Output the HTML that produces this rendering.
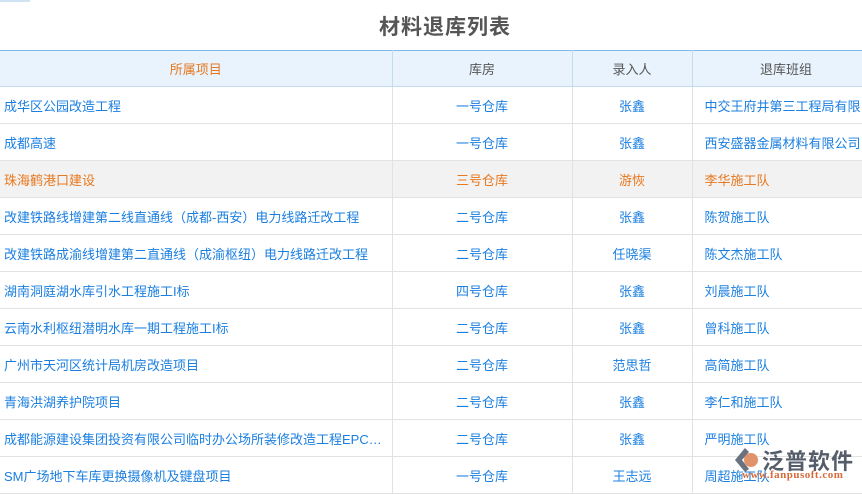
<!DOCTYPE html>
<html><head><meta charset="utf-8"><style>
body{margin:0;width:862px;height:490px;overflow:hidden;background:#fff;font-family:"Liberation Sans","Noto Sans CJK SC",sans-serif;position:relative}
.tab{position:absolute;left:0;top:0;width:30px;height:2px;background:#cfe3f5}
h1{position:absolute;top:11px;left:0;width:890px;text-align:center;margin:0;font-size:21px;font-weight:bold;color:#555;letter-spacing:1px}
table{position:absolute;top:50px;left:0;border-collapse:collapse;table-layout:fixed;width:880px}
td,th{height:36px;border-bottom:1px solid #e2e2e2;border-right:1px solid #e2e2e2;font-size:13px;white-space:nowrap;overflow:hidden;text-overflow:ellipsis;font-weight:normal;padding:0}
th{height:35px;background:#e8f3fd;color:#555;border-top:1px solid #7fb8ec;border-bottom:1px solid #c4dcf0;border-right:1px solid #c4dcf0}
th.o{color:#e8781e}
td{color:#1b7fe0;text-align:center}
td.l{text-align:left;padding-left:4px}
td.r{text-align:left;padding-left:12px}
tr.h td{background:#f2f2f2;color:#e8781e}
.logo{position:absolute;left:762px;top:444px;font-size:22px;color:#555d6b;font-weight:bold;letter-spacing:1px}
.url{position:absolute;left:742px;top:469px;font-size:11px;color:#d8693a;font-family:"Liberation Serif",serif;font-weight:bold;letter-spacing:.5px}
</style></head><body>
<div class="tab"></div>
<h1>材料退库列表</h1>
<table>
<colgroup><col style="width:392px"><col style="width:180px"><col style="width:120px"><col style="width:188px"></colgroup>
<tr><th class="o">所属项目</th><th>库房</th><th>录入人</th><th>退库班组</th></tr>
<tr><td class="l">成华区公园改造工程</td><td>一号仓库</td><td>张鑫</td><td class="r">中交王府井第三工程局有限公司</td></tr>
<tr><td class="l">成都高速</td><td>一号仓库</td><td>张鑫</td><td class="r">西安盛器金属材料有限公司</td></tr>
<tr class="h"><td class="l">珠海鹤港口建设</td><td>三号仓库</td><td>游恢</td><td class="r">李华施工队</td></tr>
<tr><td class="l">改建铁路线增建第二线直通线（成都-西安）电力线路迁改工程</td><td>二号仓库</td><td>张鑫</td><td class="r">陈贺施工队</td></tr>
<tr><td class="l">改建铁路成渝线增建第二直通线（成渝枢纽）电力线路迁改工程</td><td>二号仓库</td><td>任晓渠</td><td class="r">陈文杰施工队</td></tr>
<tr><td class="l">湖南洞庭湖水库引水工程施工I标</td><td>四号仓库</td><td>张鑫</td><td class="r">刘晨施工队</td></tr>
<tr><td class="l">云南水利枢纽潜明水库一期工程施工I标</td><td>二号仓库</td><td>张鑫</td><td class="r">曾科施工队</td></tr>
<tr><td class="l">广州市天河区统计局机房改造项目</td><td>二号仓库</td><td>范思哲</td><td class="r">高简施工队</td></tr>
<tr><td class="l">青海洪湖养护院项目</td><td>二号仓库</td><td>张鑫</td><td class="r">李仁和施工队</td></tr>
<tr><td class="l">成都能源建设集团投资有限公司临时办公场所装修改造工程EPC…</td><td>二号仓库</td><td>张鑫</td><td class="r">严明施工队</td></tr>
<tr><td class="l">SM广场地下车库更换摄像机及键盘项目</td><td>一号仓库</td><td>王志远</td><td class="r">周超施工队</td></tr>
</table>
<svg style="position:absolute;left:733px;top:446px" width="30" height="28" viewBox="0 0 30 28"><path d="M2 14 L12 2 L16 6 L9 14 L16 23 L12 26Z" fill="#6a7282"/><circle cx="18" cy="14" r="7" fill="#e0936a"/></svg>
<div class="logo">泛普软件</div>
<div class="url">www.fanpusoft.com</div>
</body></html>
